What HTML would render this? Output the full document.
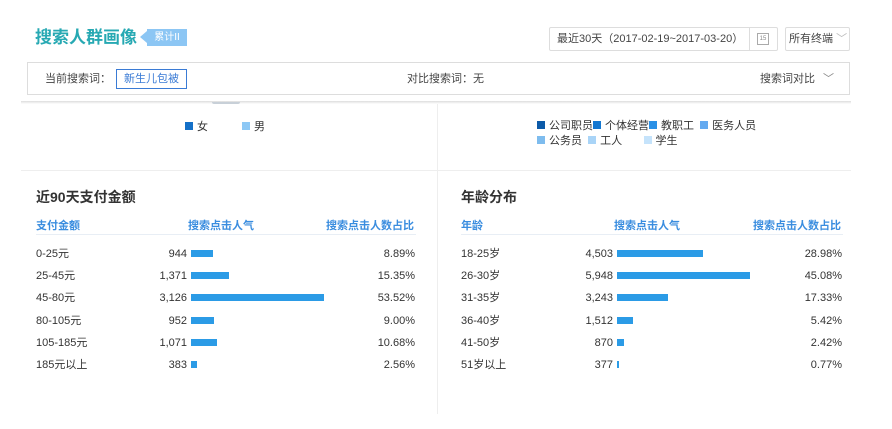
<!DOCTYPE html>
<html><head><meta charset="utf-8"><style>
*{margin:0;padding:0;box-sizing:border-box}
body{width:892px;height:429px;background:#fff;position:relative;overflow:hidden;font-family:"Liberation Sans","Noto Sans CJK SC",sans-serif;font-size:11px;color:#333}
.a{position:absolute;white-space:nowrap;line-height:14px}
.bar{position:absolute;height:7px;background:#2b9be6}
.hd{color:#3a8ddf;font-weight:bold;font-size:11px}
.sq{display:inline-block;width:8px;height:8px;margin-right:4px;vertical-align:0}
</style></head><body>
<div class="a" style="left:35px;top:28px;font-size:17px;line-height:20px;font-weight:bold;color:#27a9b3">搜索人群画像</div>
<div class="a" style="left:140px;top:31px;width:0;height:0;border-top:6px solid transparent;border-bottom:6px solid transparent;border-right:7px solid #8cc6f4"></div>
<div class="a" style="left:147px;top:29px;width:40px;height:17px;background:#8cc6f4;color:#fff;font-size:10px;line-height:17px;text-align:center">累计II</div>

<div class="a" style="left:549px;top:27px;width:229px;height:24px;border:1px solid #ddd;border-radius:2px"></div>
<div class="a" style="left:557px;top:32px;font-size:11px;color:#444">最近30天（2017-02-19~2017-03-20）</div>
<div class="a" style="left:749px;top:27px;width:1px;height:24px;background:#ddd"></div>
<div class="a" style="left:757px;top:33px;width:12px;height:12px;border:1px solid #aaa;font-size:6px;color:#888;text-align:center;line-height:10px">15</div>
<div class="a" style="left:785px;top:27px;width:65px;height:24px;border:1px solid #ddd;border-radius:2px"></div>
<div class="a" style="left:789px;top:32px;font-size:11px;color:#444">所有终端 <span style="color:#bbb">﹀</span></div>

<div class="a" style="left:27px;top:62px;width:823px;height:33px;border:1px solid #ddd"></div>
<div class="a" style="left:45px;top:72px;color:#444">当前搜索词：</div>
<div class="a" style="left:116px;top:69px;width:71px;height:20px;border:1px solid #3a7bd5;color:#3a7bd5;text-align:center;line-height:18px;font-size:11px">新生儿包被</div>
<div class="a" style="left:407px;top:72px;color:#444">对比搜索词：无</div>
<div class="a" style="left:760px;top:72px;color:#444">搜索词对比</div>
<div class="a" style="left:823px;top:72px;color:#888">﹀</div>

<div class="a" style="left:21px;top:101px;width:830px;height:3px;background:linear-gradient(#ddd,#fff)"></div>
<div class="a" style="left:437px;top:104px;width:1px;height:310px;background:#eee"></div>
<div class="a" style="left:21px;top:170px;width:830px;height:1px;background:#eee"></div>
<div class="a" style="left:212px;top:102px;width:28px;height:2px;border-radius:0 0 10px 10px;background:#c8d0d8"></div>

<div class="a" style="left:185px;top:120px"><span class="sq" style="background:#1470c8"></span>女</div>
<div class="a" style="left:242px;top:120px"><span class="sq" style="background:#8dc8f5"></span>男</div>
<div class="a" style="left:537px;top:119px"><span class="sq" style="background:#0c5aa8"></span>公司职员<span class="sq" style="background:#1477d0"></span>个体经营<span class="sq" style="background:#2a90e6"></span>教职工 &nbsp;<span class="sq" style="background:#64aaf0"></span>医务人员</div>
<div class="a" style="left:537px;top:134px"><span class="sq" style="background:#7ebcee"></span>公务员 &nbsp;<span class="sq" style="background:#a9d4f7"></span>工人 &nbsp;&nbsp;&nbsp;&nbsp;&nbsp;&nbsp;<span class="sq" style="background:#c5e3fb"></span>学生</div>

<div class="a" style="left:36px;top:188px;font-size:14px;line-height:18px;font-weight:bold;color:#333">近90天支付金额</div>
<div class="a hd" style="left:36px;top:219px">支付金额</div>
<div class="a hd" style="left:188px;top:219px">搜索点击人气</div>
<div class="a hd" style="left:326px;top:219px">搜索点击人数占比</div>
<div class="a" style="left:36px;top:234px;width:380px;height:1px;background:#e8eef5"></div>

<div class="a" style="left:461px;top:188px;font-size:14px;line-height:18px;font-weight:bold;color:#333">年龄分布</div>
<div class="a hd" style="left:461px;top:219px">年龄</div>
<div class="a hd" style="left:614px;top:219px">搜索点击人气</div>
<div class="a hd" style="left:753px;top:219px">搜索点击人数占比</div>
<div class="a" style="left:461px;top:234px;width:382px;height:1px;background:#e8eef5"></div>

<div class="a" style="left:36px;top:247px">0-25元</div><div class="a" style="right:705px;top:247px">944</div><div class="bar" style="left:191px;top:250px;width:22px"></div><div class="a" style="right:477px;top:247px">8.89%</div>
<div class="a" style="left:36px;top:269px">25-45元</div><div class="a" style="right:705px;top:269px">1,371</div><div class="bar" style="left:191px;top:272px;width:38px"></div><div class="a" style="right:477px;top:269px">15.35%</div>
<div class="a" style="left:36px;top:291px">45-80元</div><div class="a" style="right:705px;top:291px">3,126</div><div class="bar" style="left:191px;top:294px;width:133px"></div><div class="a" style="right:477px;top:291px">53.52%</div>
<div class="a" style="left:36px;top:314px">80-105元</div><div class="a" style="right:705px;top:314px">952</div><div class="bar" style="left:191px;top:317px;width:23px"></div><div class="a" style="right:477px;top:314px">9.00%</div>
<div class="a" style="left:36px;top:336px">105-185元</div><div class="a" style="right:705px;top:336px">1,071</div><div class="bar" style="left:191px;top:339px;width:26px"></div><div class="a" style="right:477px;top:336px">10.68%</div>
<div class="a" style="left:36px;top:358px">185元以上</div><div class="a" style="right:705px;top:358px">383</div><div class="bar" style="left:191px;top:361px;width:6px"></div><div class="a" style="right:477px;top:358px">2.56%</div>

<div class="a" style="left:461px;top:247px">18-25岁</div><div class="a" style="right:279px;top:247px">4,503</div><div class="bar" style="left:617px;top:250px;width:86px"></div><div class="a" style="right:50px;top:247px">28.98%</div>
<div class="a" style="left:461px;top:269px">26-30岁</div><div class="a" style="right:279px;top:269px">5,948</div><div class="bar" style="left:617px;top:272px;width:133px"></div><div class="a" style="right:50px;top:269px">45.08%</div>
<div class="a" style="left:461px;top:291px">31-35岁</div><div class="a" style="right:279px;top:291px">3,243</div><div class="bar" style="left:617px;top:294px;width:51px"></div><div class="a" style="right:50px;top:291px">17.33%</div>
<div class="a" style="left:461px;top:314px">36-40岁</div><div class="a" style="right:279px;top:314px">1,512</div><div class="bar" style="left:617px;top:317px;width:16px"></div><div class="a" style="right:50px;top:314px">5.42%</div>
<div class="a" style="left:461px;top:336px">41-50岁</div><div class="a" style="right:279px;top:336px">870</div><div class="bar" style="left:617px;top:339px;width:7px"></div><div class="a" style="right:50px;top:336px">2.42%</div>
<div class="a" style="left:461px;top:358px">51岁以上</div><div class="a" style="right:279px;top:358px">377</div><div class="bar" style="left:617px;top:361px;width:2px"></div><div class="a" style="right:50px;top:358px">0.77%</div>
</body></html>
